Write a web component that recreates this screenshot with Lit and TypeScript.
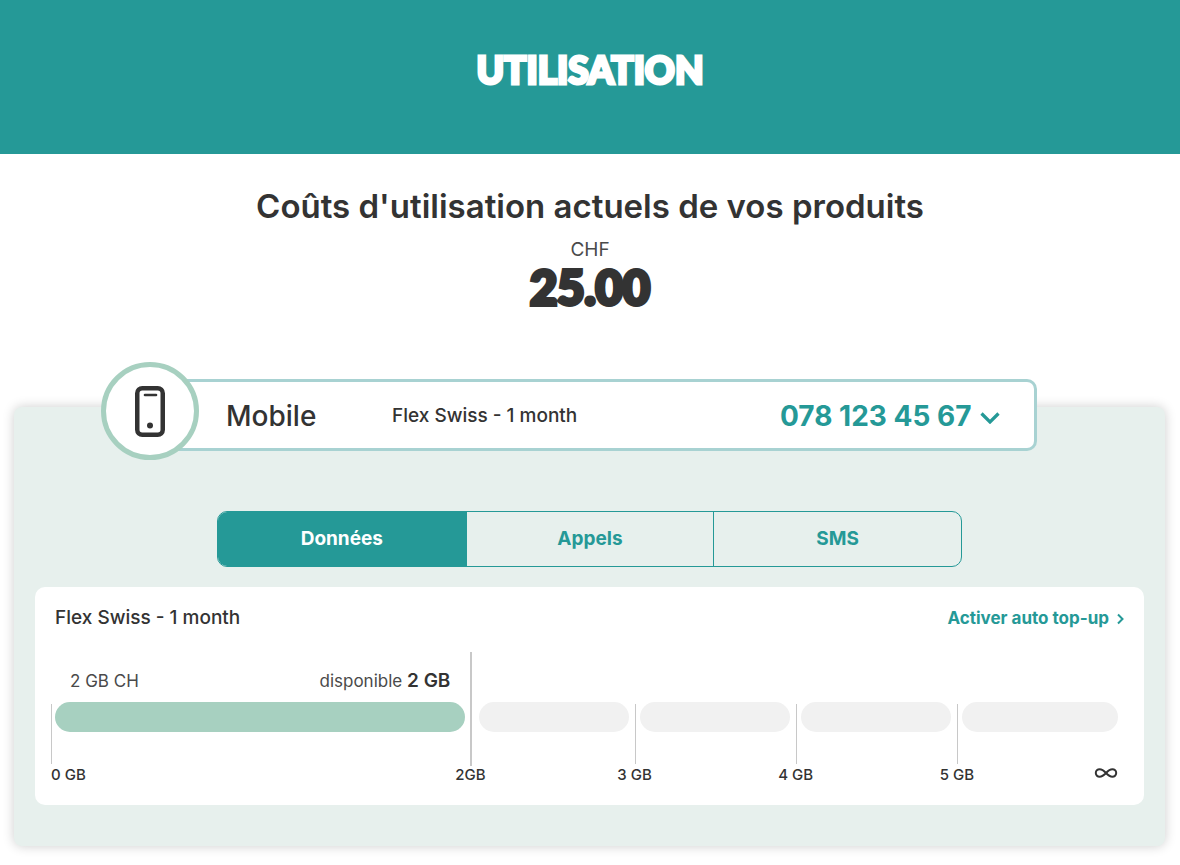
import { LitElement, html, css, svg } from "lit";
import { customElement, property, state } from "lit/decorators.js";
import { classMap } from "lit/directives/class-map.js";

const phoneIcon = svg`
  <rect x="2.250" y="2.250" width="25.500" height="46.500" rx="5" fill="none" stroke="#333" stroke-width="4.500" />
  <path d="M10 9h11" stroke="#333" stroke-width="2.600" stroke-linecap="round" />
  <circle cx="15" cy="39.500" r="3" fill="#333" />
`;

const infinityIcon = svg`
  <path
    d="M12 5C9.800 2.600 8 1.200 5.600 1.200A3.800 3.800 0 0 0 5.600 8.800C8 8.800 9.800 7.400 12 5S16 1.200 18.400 1.200A3.800 3.800 0 0 1 18.400 8.800C16 8.800 14.200 7.400 12 5Z"
    fill="none" stroke="#333" stroke-width="2" />
`;

@customElement("usage-scale")
export class UsageScale extends LitElement {
  @property() allowance = "2 GB CH";
  @property() available = "2 GB";

  static styles = css`
    :host {
      display: block;
    }
    .cells,
    .labels {
      display: grid;
      grid-template-columns: 419fr 164fr 161fr 161fr 161fr;
    }
    .cells {
      height: 114px;
      align-items: end;
    }
    .cell {
      box-sizing: border-box;
      padding: 0 6px 0 4px;
      border-left: 1px solid transparent;
      background: linear-gradient(#c8c8c8, #c8c8c8) left bottom 2px / 1px 60px no-repeat;
      background-origin: border-box;
    }
    .cell.first {
      height: 114px;
      display: flex;
      flex-direction: column;
      padding: 0 5px 0 3px;
    }
    .cell.limit {
      height: 114px;
      padding-top: 50px;
      padding-left: 8px;
      background-position: left bottom;
      background-size: 2px 114px;
    }
    .cell.step {
      height: 64px;
    }
    .cell.last {
      padding-right: 0;
    }
    .caption {
      box-sizing: border-box;
      height: 50px;
      padding: 18px 15px 0;
      display: flex;
      justify-content: space-between;
      align-items: baseline;
      font-size: 17px;
      line-height: 22px;
      color: #4a4a4a;
    }
    .caption strong {
      font-size: 19px;
      font-weight: 600;
      color: #333;
    }
    .bar {
      height: 30px;
      border-radius: 15px;
      background: #f1f1f1;
    }
    .bar.full {
      background: #a7d0c0;
    }
    .labels {
      font-size: 15px;
      line-height: 18px;
      font-weight: 500;
    }
    .label {
      width: 0;
      display: flex;
      justify-content: center;
      white-space: nowrap;
    }
    .label.start {
      justify-content: flex-start;
    }
    .label.end {
      width: auto;
      display: flex;
      justify-content: space-between;
    }
    .anchor {
      width: 0;
      display: flex;
      justify-content: center;
    }
    .infinity {
      width: 24px;
      height: 10px;
      margin-top: 2px;
    }
  `;

  render() {
    return html`
      <div class="cells">
        <div class="cell first">
          <div class="caption">
            <span>${this.allowance}</span>
            <span>disponible <strong>${this.available}</strong></span>
          </div>
          <div class="bar full"></div>
        </div>
        <div class="cell limit"><div class="bar"></div></div>
        <div class="cell step"><div class="bar"></div></div>
        <div class="cell step"><div class="bar"></div></div>
        <div class="cell step last"><div class="bar"></div></div>
      </div>
      <div class="labels">
        <span class="label start">0 GB</span>
        <span class="label">2GB</span>
        <span class="label">3 GB</span>
        <span class="label">4 GB</span>
        <span class="label end">
          <span class="anchor">5 GB</span>
          <svg class="infinity" viewBox="0 0 24 10" role="img" aria-label="illimité">${infinityIcon}</svg>
        </span>
      </div>
    `;
  }
}

@customElement("app-root")
export class AppRoot extends LitElement {
  @state() private tab = "Données";

  private readonly tabs = ["Données", "Appels", "SMS"];

  static styles = css`
    :host {
      display: block;
      background: #fff;
      color: #333;
      font-family: Inter, "Open Sans", sans-serif;
    }
    .banner {
      display: flex;
      justify-content: center;
      padding: 45px 16px 59px;
      background: #259997;
      color: #fff;
    }
    .title {
      margin: 0;
      font-family: Lato, sans-serif;
      font-size: 37px;
      line-height: 50px;
      font-weight: 900;
      -webkit-text-stroke: 3px currentColor;
      text-transform: uppercase;
    }
    .summary {
      padding: 32px 16px 0;
      text-align: center;
    }
    .heading {
      margin: 0;
      font-size: 33px;
      line-height: 40px;
      font-weight: 600;
    }
    .currency {
      margin: 12px 0 0;
      font-size: 19px;
      line-height: 24px;
      color: #4a4a4a;
    }
    .amount {
      margin: 0;
      font-family: Lato, sans-serif;
      font-size: 47px;
      line-height: 50px;
      font-weight: 900;
      -webkit-text-stroke: 4px currentColor;
    }
    .panel {
      margin: 95px 15px 18px 14px;
      padding: 1px 21px 41px;
      border-radius: 8px;
      background: #e7f0ed;
      box-shadow: 0 0 12px rgba(0, 0, 0, 0.2);
    }
    .product {
      display: flex;
      align-items: center;
      margin: -46px 107px 0 66px;
    }
    .badge {
      position: relative;
      box-sizing: border-box;
      flex: none;
      display: grid;
      place-items: center;
      width: 98px;
      height: 98px;
      border: 5px solid #a7d0c0;
      border-radius: 50%;
      background: #fff;
    }
    .phone {
      width: 30px;
      height: 51px;
    }
    .card {
      box-sizing: border-box;
      flex: 1;
      display: flex;
      align-items: center;
      height: 72px;
      margin: 8px 0 0 -49px;
      padding: 2px 34px 0 76px;
      border: 3px solid #a8d2d2;
      border-left: 0;
      border-radius: 0 10px 10px 0;
      background: #fff;
    }
    .kind {
      margin: 0;
      flex: none;
      width: 166px;
      font-size: 28px;
      line-height: 34px;
      font-weight: 500;
    }
    .plan {
      flex: 1;
      font-size: 19px;
      line-height: 24px;
      font-weight: 500;
    }
    .picker {
      display: grid;
      align-items: center;
      color: #259997;
    }
    .number,
    .chevron {
      grid-area: 1 / 1;
    }
    .number {
      appearance: none;
      margin: 0;
      padding: 0 28px 0 0;
      border: 0;
      background: transparent;
      color: inherit;
      font: 700 28px/34px Inter, sans-serif;
      cursor: pointer;
    }
    .chevron {
      justify-self: end;
      width: 20px;
      height: 12px;
      margin-top: 4px;
      pointer-events: none;
    }
    .tabs {
      display: grid;
      grid-template-columns: repeat(3, 1fr);
      width: 68%;
      max-width: 745px;
      min-width: 300px;
      box-sizing: border-box;
      margin: 51px auto 20px;
      border: 1px solid #259997;
      border-radius: 10px;
      overflow: hidden;
    }
    .tab {
      height: 54px;
      padding: 0;
      border: 0;
      border-left: 1px solid #259997;
      background: transparent;
      color: #259997;
      font: 700 19px/24px Inter, sans-serif;
      cursor: pointer;
    }
    .tab:first-child {
      border-left: 0;
    }
    .tab.active {
      background: #259997;
      color: #fff;
    }
    .usage {
      padding: 19px 20px 21px 16px;
      border-radius: 10px;
      background: #fff;
    }
    .row {
      display: flex;
      justify-content: space-between;
      align-items: center;
      margin: 0 0 22px 4px;
    }
    .name {
      margin: 0;
      font-size: 19px;
      line-height: 24px;
      font-weight: 500;
    }
    .topup {
      display: flex;
      align-items: center;
      gap: 8px;
      color: #259997;
      font-size: 17px;
      line-height: 22px;
      font-weight: 700;
      text-decoration: none;
    }
    .arrow {
      width: 7px;
      height: 12px;
      margin-top: 2px;
    }
    .scale {
      margin-right: 6px;
    }
  `;

  render() {
    return html`
      <header class="banner"><h1 class="title">Utilisation</h1></header>
      <main>
        <section class="summary">
          <h2 class="heading">Coûts d'utilisation actuels de vos produits</h2>
          <p class="currency">CHF</p>
          <p class="amount">25.00</p>
        </section>
        <section class="panel">
          <div class="product">
            <span class="badge">
              <svg class="phone" viewBox="0 0 30 51" aria-hidden="true">${phoneIcon}</svg>
            </span>
            <div class="card">
              <h3 class="kind">Mobile</h3>
              <span class="plan">Flex Swiss - 1 month</span>
              <label class="picker">
                <select class="number" aria-label="Numéro">
                  <option>078 123 45 67</option>
                </select>
                <svg class="chevron" viewBox="0 0 20 12" aria-hidden="true">
                  <path d="M1.500 1.500L10 10L18.500 1.500" fill="none" stroke="#259997" stroke-width="3.200" />
                </svg>
              </label>
            </div>
          </div>
          <div class="tabs" role="tablist">
            ${this.tabs.map(
              (name) => html`<button
                class=${classMap({ tab: true, active: this.tab === name })}
                role="tab"
                aria-selected=${this.tab === name}
                @click=${() => (this.tab = name)}
              >${name}</button>`
            )}
          </div>
          <article class="usage">
            <div class="row">
              <h4 class="name">Flex Swiss - 1 month</h4>
              <a class="topup" href="#top-up">Activer auto top-up
                <svg class="arrow" viewBox="0 0 7 12" aria-hidden="true">
                  <path d="M1 1.500L5.500 6L1 10.500" fill="none" stroke="#259997" stroke-width="2" />
                </svg>
              </a>
            </div>
            <usage-scale class="scale"></usage-scale>
          </article>
        </section>
      </main>
    `;
  }
}
